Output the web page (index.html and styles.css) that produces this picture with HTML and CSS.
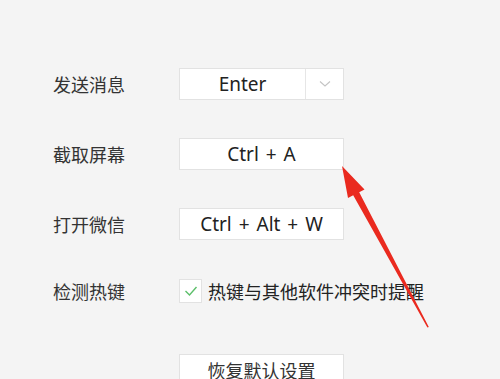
FILE: index.html
```html
<!DOCTYPE html>
<html lang="zh-CN">
<head>
<meta charset="utf-8">
<link rel="stylesheet" href="styles.css">
</head>
<body>
<div class="panel">
  <div class="row">
    <div class="label">发送消息</div>
    <div class="box select">
      <span class="value">Enter</span>
      <span class="drop"><svg width="12" height="8" viewBox="0 0 12 8"><path d="M1 1.5 L6 6 L11 1.5" fill="none" stroke="#c4c4c4" stroke-width="1.1"/></svg></span>
    </div>
  </div>
  <div class="row">
    <div class="label">截取屏幕</div>
    <div class="box">Ctrl + A</div>
  </div>
  <div class="row">
    <div class="label">打开微信</div>
    <div class="box">Ctrl + Alt + W</div>
  </div>
  <div class="row row-check">
    <div class="label">检测热键</div>
    <div class="check">
      <span class="checkbox"><svg width="14" height="12" viewBox="0 0 14 12"><path d="M1.5 6 L5.5 10 L12.5 2" fill="none" stroke="#5cbf6a" stroke-width="1.4"/></svg></span>
      <span class="check-text">热键与其他软件冲突时提醒</span>
    </div>
  </div>
  <div class="row row-restore">
    <div class="label"></div>
    <div class="box restore">恢复默认设置</div>
  </div>
</div>
<svg class="arrow" width="500" height="379" viewBox="0 0 500 379">
  <polygon points="342,166 364.5,189.5 359.2,192.3 428.8,327 427.4,327.6 353.2,195.3 348,198" fill="#ea2a1f"/>
</svg>
</body>
</html>
```
FILE: styles.css
```css
html, body {
  margin: 0;
  padding: 0;
}
body {
  width: 500px;
  height: 379px;
  overflow: hidden;
  background: #f4f4f4;
  font-family: "Noto Sans CJK SC", "Noto Sans", sans-serif;
  color: #333;
  position: relative;
}
.panel {
  display: flex;
  flex-direction: column;
  gap: 38px;
  padding: 68px 0 0 53px;
}
.row {
  display: flex;
  align-items: center;
  height: 32px;
}
.row-check {
  margin-top: -3px;
}
.row-restore {
  margin-top: 9px;
}
.label {
  width: 126px;
  font-size: 18px;
  line-height: 24px;
  color: #333;
}
.box {
  box-sizing: border-box;
  width: 165px;
  height: 32px;
  background: #fff;
  border: 1px solid #e2e2e2;
  display: flex;
  align-items: center;
  justify-content: center;
  font-family: "Noto Sans", "Noto Sans CJK SC", sans-serif;
  font-size: 19px;
  word-spacing: 2px;
  color: #222;
}
.select {
  justify-content: flex-start;
}
.select .value {
  flex: 1;
  text-align: center;
  height: 100%;
  display: flex;
  align-items: center;
  justify-content: center;
}
.select .drop {
  width: 37px;
  height: 100%;
  border-left: 1px solid #e6e6e6;
  display: flex;
  align-items: center;
  justify-content: center;
}
.check {
  display: flex;
  align-items: center;
  gap: 6px;
}
.checkbox {
  box-sizing: border-box;
  width: 23px;
  height: 24px;
  background: #fff;
  border: 1px solid #e2e2e2;
  display: flex;
  align-items: center;
  justify-content: center;
}
.check-text {
  font-size: 18px;
  color: #222;
}
.restore {
  font-family: "Noto Sans CJK SC", sans-serif;
  font-size: 18px;
  word-spacing: 0;
  color: #333;
}
.arrow {
  position: absolute;
  left: 0;
  top: 0;
  pointer-events: none;
}
```
